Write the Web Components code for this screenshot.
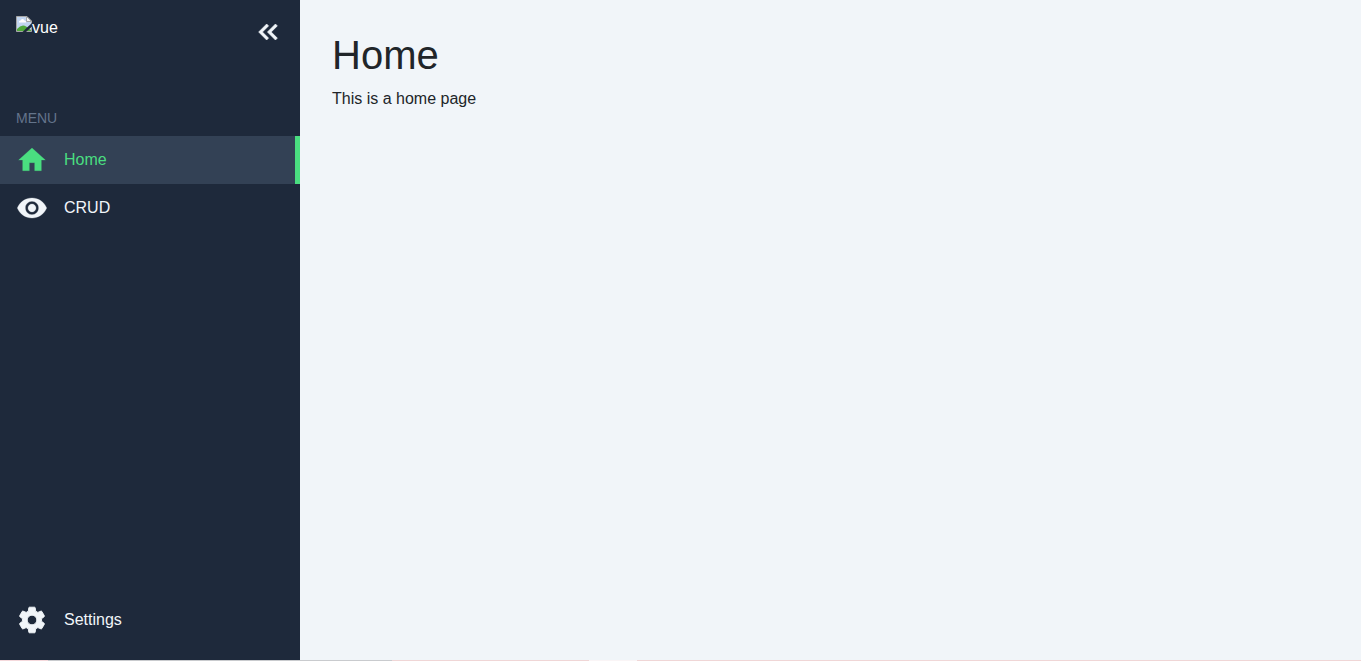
<!DOCTYPE html>
<html lang="en">
<head>
<meta charset="utf-8">
<meta name="viewport" content="width=device-width, initial-scale=1">
<title>Home</title>
<style>
  :root {
    --primary: #4ade80;
    --dark: #1e293b;
    --dark-alt: #334155;
    --light: #f1f5f9;
    --grey: #64748b;
    --sidebar-width: 300px;
  }
  body {
    margin: 0;
    font: 16px/24px "Liberation Sans", Arial, sans-serif;
    color: #212529;
    background: var(--light);
  }
</style>
</head>
<body>
<app-shell>
  <side-bar slot="side">
    <nav-item icon="home" href="#/" active>Home</nav-item>
    <nav-item icon="eye" href="#/crud">CRUD</nav-item>
    <nav-item slot="bottom" icon="gear" href="#/settings">Settings</nav-item>
  </side-bar>
  <page-view>
    <span slot="title">Home</span>
    This is a home page
  </page-view>
</app-shell>

<script>
const ICONS = {
  home: { d: 'M10 20v-6h4v6h5v-8h3L12 3 2 12h3v8z', weight: 0.2 },
  eye: { d: 'M12 4.5C7 4.5 2.73 7.61 1 12c1.73 4.39 6 7.5 11 7.5s9.27-3.11 11-7.5c-1.73-4.39-6-7.5-11-7.5zM12 17c-2.76 0-5-2.24-5-5s2.24-5 5-5 5 2.24 5 5-2.24 5-5 5zm0-8c-1.66 0-3 1.34-3 3s1.34 3 3 3 3-1.34 3-3-1.34-3-3-3z', weight: 0.2 },
  gear: { d: 'M19.14 12.94c.04-.3.06-.61.06-.94 0-.32-.02-.64-.07-.94l2.03-1.58c.18-.14.23-.41.12-.61l-1.92-3.32c-.12-.22-.37-.29-.59-.22l-2.39.96c-.5-.38-1.03-.7-1.62-.94L14.4 2.810c-.04-.24-.24-.41-.48-.41h-3.840c-.24 0-.43.17-.47.41L9.250 5.350C8.660 5.590 8.120 5.920 7.630 6.290L5.240 5.330c-.22-.08-.47 0-.59.22L2.740 8.870c-.12.21-.08.47.12.61l2.030 1.580C4.840 11.360 4.800 11.690 4.800 12s.02.64.07.94l-2.030 1.580c-.18.14-.23.41-.12.61l1.920 3.320c.12.22.37.29.59.22l2.390-.96c.5.38 1.030.7 1.620.94l.36 2.540c.05.24.24.41.48.41h3.840c.24 0 .44-.17.47-.41l.36-2.540c.59-.24 1.130-.56 1.620-.94l2.390.96c.22.08.47 0 .59-.22l1.920-3.320c.12-.22.07-.47-.12-.61zM12 15.600c-1.980 0-3.600-1.620-3.600-3.600s1.620-3.600 3.600-3.600 3.600 1.620 3.600 3.600-1.620 3.600-3.600 3.600z', weight: 0.7 },
  collapse: { d: 'M17.59 18 19 16.59 14.42 12 19 7.41 17.59 6l-6 6zM11 18l1.41-1.41L7.83 12l4.58-4.59L11 6l-6 6z', weight: 0.5 }
};

class AppIcon extends HTMLElement {
  constructor() {
    super();
    this.attachShadow({ mode: 'open' }).innerHTML = `
      <style>
        :host { display: block; width: 32px; height: 32px; flex: none; }
        svg {
          display: block; width: 100%; height: 100%;
          fill: currentColor; stroke: currentColor; stroke-linejoin: round;
        }
      </style>
      <svg viewBox="0 0 24 24" aria-hidden="true"><path/></svg>`;
  }
  connectedCallback() {
    const icon = ICONS[this.getAttribute('name')];
    if (!icon) return;
    const path = this.shadowRoot.querySelector('path');
    path.setAttribute('d', icon.d);
    path.setAttribute('stroke-width', icon.weight);
  }
}
customElements.define('app-icon', AppIcon);

class BrandLogo extends HTMLElement {
  constructor() {
    super();
    this.attachShadow({ mode: 'open' }).innerHTML = `
      <style>
        :host { display: flex; align-items: flex-start; color: #fff; }
        svg { display: block; flex: none; }
      </style>
      <svg width="16" height="16" viewBox="0 0 16 16" aria-hidden="true">
        <path d="M.5.5H11L15.500 5v10.500H.5z" fill="#c2d5f0"/>
        <path d="M3 6.500q-.5-2 1.500-2 .5-1.500 2-1.500t2 1.500q2 0 1.500 2z" fill="#fff"/>
        <path d="M1 15v-2q3-3.500 6-3.500t8 4.500v1z" fill="#4ea83b"/>
        <path d="M.5.5H11L15.500 5v10.500H.5z" fill="none" stroke="#a6a6a6"/>
        <path d="M10.500.5V5.500h5z" fill="#f4f4f4" stroke="#a6a6a6"/>
        <path d="M16 7v3.500L10 16H6.500L10.500 12z" fill="#1e293b"/>
      </svg>
      <span>vue</span>`;
  }
}
customElements.define('brand-logo', BrandLogo);

class NavItem extends HTMLElement {
  constructor() {
    super();
    this.attachShadow({ mode: 'open' }).innerHTML = `
      <style>
        :host { display: block; }
        a {
          display: flex; align-items: center; gap: 16px;
          box-sizing: border-box; padding: 8px 16px;
          color: var(--light); text-decoration: none;
        }
        a:hover { background: var(--dark-alt); color: var(--primary); }
        :host([active]) a {
          background: var(--dark-alt); color: var(--primary);
          border-right: 5px solid var(--primary);
        }
      </style>
      <a><app-icon></app-icon><span><slot></slot></span></a>`;
  }
  connectedCallback() {
    const link = this.shadowRoot.querySelector('a');
    link.setAttribute('href', this.getAttribute('href'));
    if (this.hasAttribute('active')) link.setAttribute('aria-current', 'page');
    const icon = document.createElement('app-icon');
    icon.setAttribute('name', this.getAttribute('icon'));
    link.querySelector('app-icon').replaceWith(icon);
  }
}

class SideBar extends HTMLElement {
  constructor() {
    super();
    this.attachShadow({ mode: 'open' }).innerHTML = `
      <style>
        :host { display: block; background: var(--dark); color: var(--light); }
        aside {
          display: flex; flex-direction: column;
          box-sizing: border-box; height: 100%; padding: 16px 0;
        }
        header {
          display: flex; justify-content: space-between; align-items: flex-start;
          padding: 0 16px; margin-bottom: 60px;
        }
        button {
          margin: 0; padding: 0; border: 0; background: none;
          color: inherit; cursor: pointer;
        }
        h3 {
          margin: 0 0 7px; padding: 0 16px;
          font-size: 14px; line-height: 21px; font-weight: 400;
          color: var(--grey); text-transform: uppercase;
        }
        .space { flex: 1; }
      </style>
      <aside>
        <header>
          <brand-logo></brand-logo>
          <button type="button" aria-label="Collapse menu"><app-icon name="collapse"></app-icon></button>
        </header>
        <h3>Menu</h3>
        <nav aria-label="Main"><slot></slot></nav>
        <div class="space"></div>
        <nav aria-label="Settings"><slot name="bottom"></slot></nav>
      </aside>`;
  }
}

class PageView extends HTMLElement {
  constructor() {
    super();
    this.attachShadow({ mode: 'open' }).innerHTML = `
      <style>
        :host { display: block; }
        main { padding: 32px; }
        h1 { margin: 0 0 8px; font-size: 40px; line-height: 47px; font-weight: 400; }
        p { margin: 0; }
      </style>
      <main>
        <h1><slot name="title"></slot></h1>
        <p><slot></slot></p>
      </main>`;
  }
}

class AppShell extends HTMLElement {
  constructor() {
    super();
    this.attachShadow({ mode: 'open' }).innerHTML = `
      <style>
        :host {
          display: grid; min-height: 100vh;
          grid-template: 1fr 1px / var(--sidebar-width) 1fr;
        }
        .edge {
          grid-column: 1 / -1;
          background: linear-gradient(90deg,
            #f5d9dc 0 48px, #c9cbce 48px 392px, #f0d6d6 392px 589px,
            #faf5f6 589px 637px, #f0d6d6 637px);
        }
      </style>
      <slot name="side"></slot>
      <slot></slot>
      <div class="edge"></div>`;
  }
}
customElements.define('nav-item', NavItem);
customElements.define('side-bar', SideBar);
customElements.define('page-view', PageView);
customElements.define('app-shell', AppShell);
</script>
</body>
</html>
